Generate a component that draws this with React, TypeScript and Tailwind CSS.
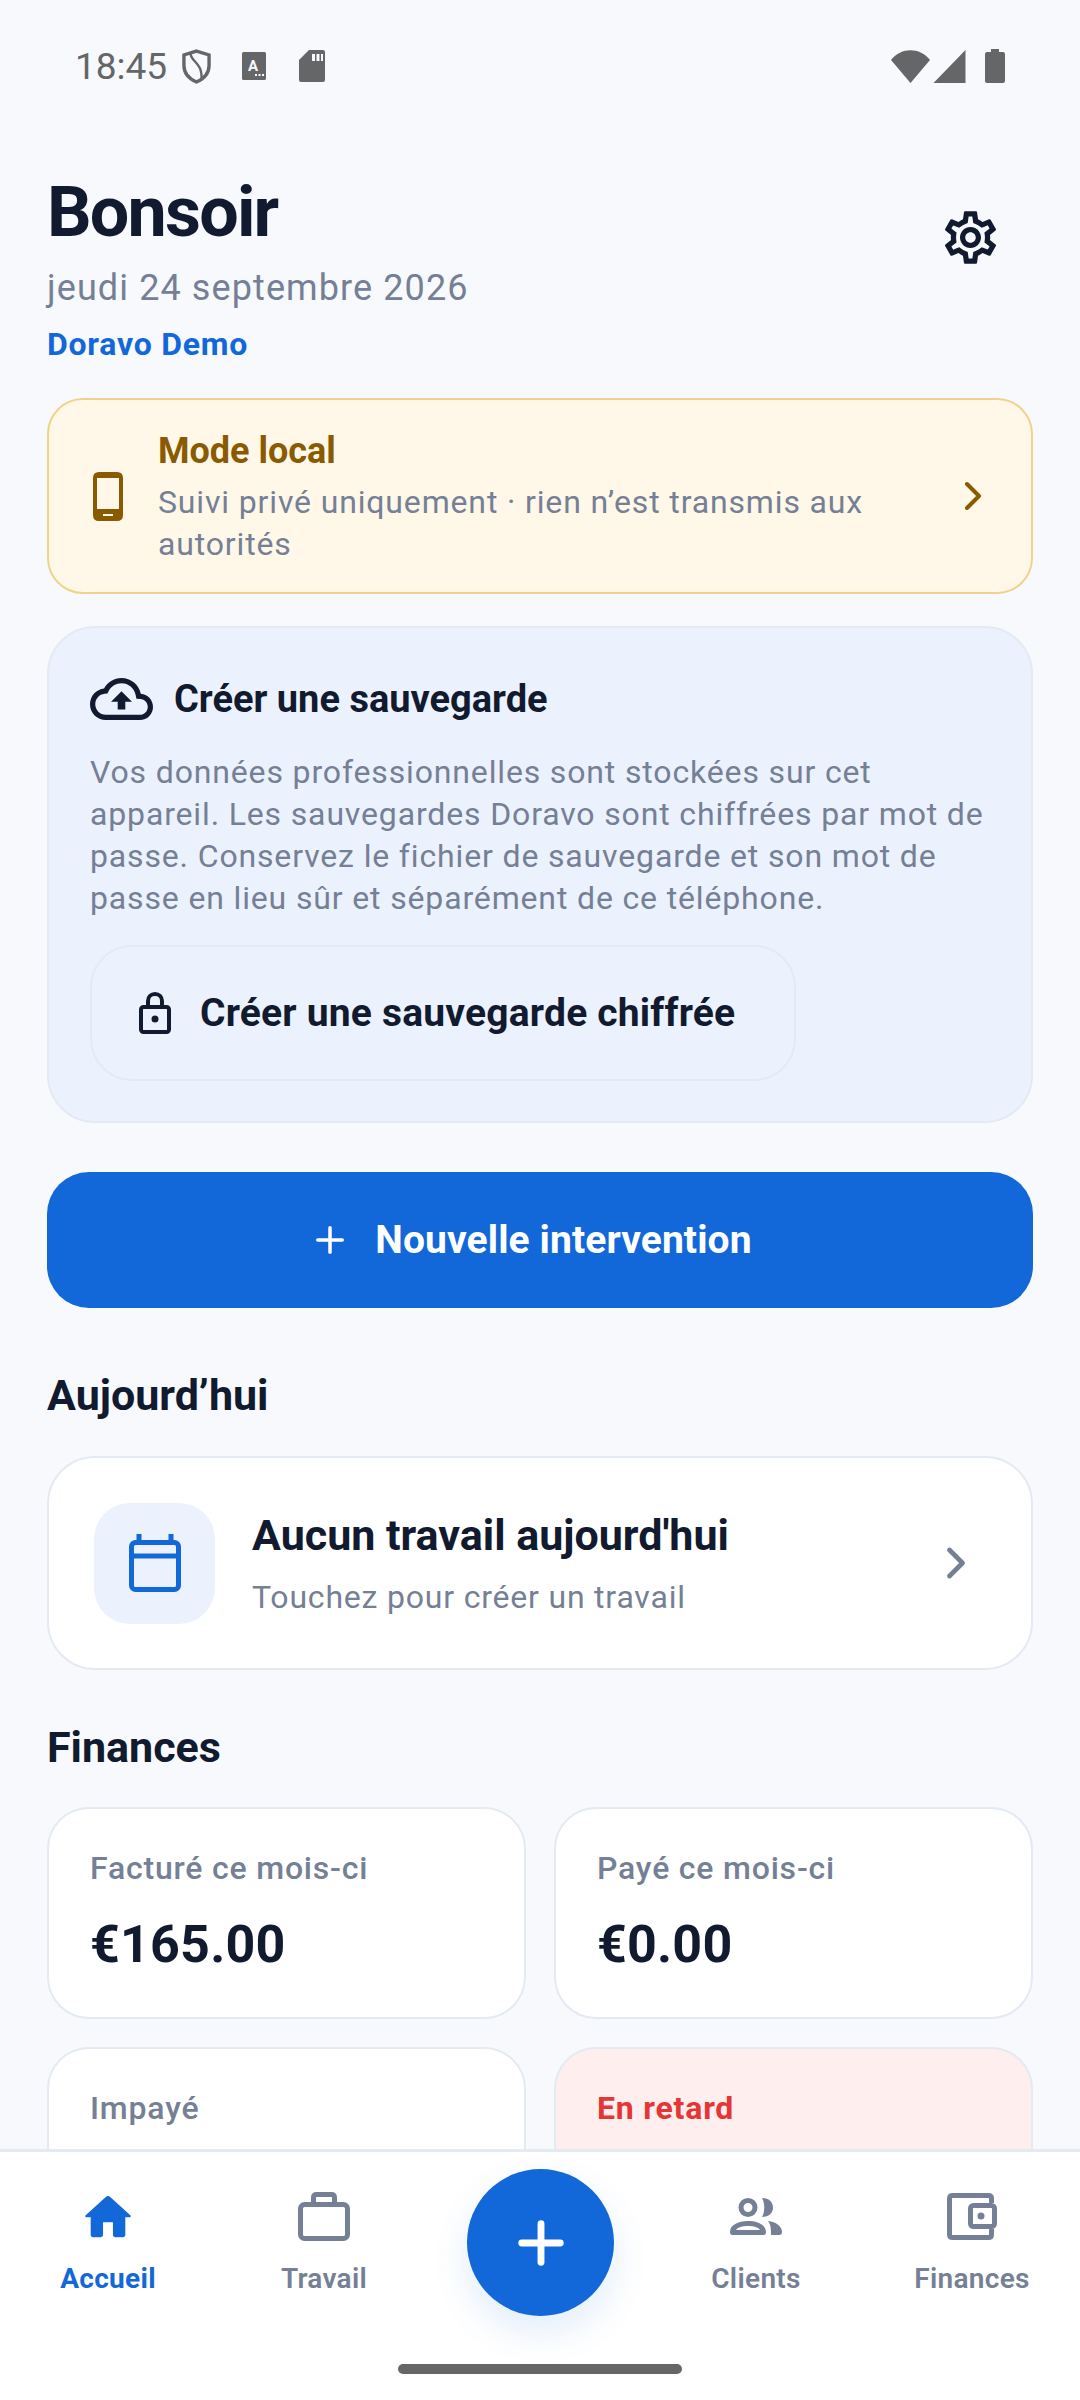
import React from 'react';
import { Plus, ChevronRight } from 'lucide-react';

const GearIcon = () => (
  <svg viewBox="0 0 24 24" className="w-[63px] h-[63px]" fill="#111a2e">
    <path d="M19.43 12.98c.04-.32.07-.64.07-.98s-.03-.66-.07-.98l2.11-1.65c.19-.15.24-.42.12-.64l-2-3.46c-.12-.22-.39-.3-.61-.22l-2.49 1c-.52-.4-1.08-.73-1.69-.98l-.38-2.65C14.46 2.18 14.25 2 14 2h-4c-.25 0-.46.18-.49.42l-.38 2.65c-.61.25-1.17.59-1.69.98l-2.49-1c-.23-.09-.49 0-.61.22l-2 3.46c-.13.22-.07.49.12.64l2.11 1.65c-.04.32-.07.65-.07.98s.03.66.07.98l-2.11 1.65c-.19.15-.24.42-.12.64l2 3.46c.12.22.39.3.61.22l2.49-1c.52.4 1.08.73 1.69.98l.38 2.65c.03.24.24.42.49.42h4c.25 0 .46-.18.49-.42l.38-2.65c.61-.25 1.17-.59 1.69-.98l2.49 1c.23.09.49 0 .61-.22l2-3.46c.12-.22.07-.49-.12-.64l-2.11-1.65zm-1.98-1.71c.04.31.05.52.05.73s-.02.43-.05.73l-.14 1.13.89.7 1.08.84-.7 1.21-1.27-.51-1.04-.42-.9.68c-.43.32-.84.56-1.25.73l-1.06.43-.16 1.13-.2 1.35h-1.4l-.19-1.35-.16-1.13-1.06-.43c-.43-.18-.83-.41-1.23-.71l-.91-.7-1.06.43-1.27.51-.7-1.21 1.08-.84.89-.7-.14-1.13c-.03-.31-.05-.54-.05-.74s.02-.43.05-.73l.14-1.13-.89-.7-1.08-.84.7-1.21 1.27.51 1.04.42.9-.68c.43-.32.84-.56 1.25-.73l1.06-.43.16-1.13.2-1.35h1.39l.19 1.35.16 1.13 1.06.43c.43.18.83.41 1.23.71l.91.7 1.06-.43 1.27-.51.7 1.21-1.07.85-.89.7.14 1.13zM12 8c-2.21 0-4 1.79-4 4s1.79 4 4 4 4-1.79 4-4-1.79-4-4-4zm0 6c-1.1 0-2-.9-2-2s.9-2 2-2 2 .9 2 2-.9 2-2 2z" />
  </svg>
);

const StatusBar = () => (
  <div className="h-[132px] shrink-0 flex items-center justify-between pl-[75px] pr-[75px]">
    <div className="flex items-center">
      <span className="text-[37px] leading-none text-[#646668] font-['Roboto',sans-serif]">18:45</span>
      <svg viewBox="0 0 30 36" className="w-[29px] h-[35px] ml-[15px]" fill="none" stroke="#646668" strokeWidth="3.5">
        <path d="M15 2 L28 6 V17 C28 26 22 31 15 34 C8 31 2 26 2 17 V6 Z" />
        <path d="M9 5 C9 13 22 14 20 32" strokeWidth="2.5" />
      </svg>
      <svg viewBox="0 0 24 28" className="w-[24px] h-[28px] ml-[31px]">
        <rect width="24" height="28" rx="1.5" fill="#646668" />
        <text x="11" y="19" fontSize="15" fontWeight="700" textAnchor="middle" fill="#f7f9fd" fontFamily="Roboto, sans-serif">A</text>
        <rect x="13" y="22" width="2" height="2" fill="#f7f9fd" />
        <rect x="16.5" y="22" width="2" height="2" fill="#f7f9fd" />
        <rect x="20" y="22" width="2" height="2" fill="#f7f9fd" />
      </svg>
      <svg viewBox="0 0 26 32" className="w-[26px] h-[32px] ml-[33px]">
        <path d="M10 0 H24 Q26 0 26 2 V30 Q26 32 24 32 H2 Q0 32 0 30 V10 Z" fill="#646668" />
        <rect x="13" y="4" width="3" height="7" fill="#f7f9fd" />
        <rect x="17.5" y="4" width="3" height="7" fill="#f7f9fd" />
        <rect x="22" y="4" width="2" height="7" fill="#f7f9fd" />
      </svg>
    </div>
    <div className="flex items-center">
      <svg viewBox="0 0 39 33" className="w-[39px] h-[33px]" fill="#646668">
        <path d="M0 10 C10 -3 29 -3 39 10 L19.5 33 Z" />
      </svg>
      <svg viewBox="0 0 32 33" className="w-[33px] h-[33px] ml-[3px]" fill="#646668">
        <path d="M32 0 V33 H0 Z" />
      </svg>
      <svg viewBox="0 0 20 34" className="w-[20px] h-[34px] ml-[19px]" fill="#646668">
        <path d="M6 0 H14 V3 H18 Q20 3 20 5 V32 Q20 34 18 34 H2 Q0 34 0 32 V5 Q0 3 2 3 H6 Z" />
      </svg>
    </div>
  </div>
);

const Header = () => (
  <div className="flex items-start justify-between pl-[47px] pr-[78px] pt-[40px]">
    <div>
      <h1 className="text-[70px] leading-[80px] font-bold tracking-[-1.8px] text-[#111a2e]">Bonsoir</h1>
      <p className="mt-[14px] text-[36px] leading-[44px] text-[#757f95] tracking-[1.1px]">jeudi 24 septembre 2026</p>
      <p className="mt-[15px] text-[32px] leading-[38px] font-bold text-[#1268d8] tracking-[0.75px]">Doravo Demo</p>
    </div>
    <div className="mt-[34px]"><GearIcon /></div>
  </div>
);

const LocalModeCard = () => (
  <div className="mt-[35px] mx-[47px] h-[196px] rounded-[36px] border-2 border-[#f0d28a] bg-[#fff8e8] flex items-center pl-[44px] pr-[42px]">
    <svg viewBox="0 0 30 49" className="w-[30px] h-[49px] shrink-0">
      <path fillRule="evenodd" fill="#8a5a00" d="M6 0 H24 Q30 0 30 6 V43 Q30 49 24 49 H6 Q0 49 0 43 V6 Q0 0 6 0 Z M4 6 V37 H26 V6 Z M10 42 V44 H20 V42 Z" />
    </svg>
    <div className="ml-[35px] flex-1 min-w-0 pr-[20px] pt-[3px]">
      <p className="text-[36px] leading-[42px] font-bold text-[#8a5a00]">Mode local</p>
      <p className="mt-[9px] text-[32px] leading-[42px] text-[#757f95] tracking-[0.85px]">Suivi privé uniquement · rien n’est transmis aux autorités</p>
    </div>
    <ChevronRight className="w-[48px] h-[48px] shrink-0 text-[#8a5a00] -mr-[8px]" strokeWidth={2} />
  </div>
);

const BackupCard = () => (
  <div className="mt-[32px] mx-[47px] h-[497px] rounded-[48px] border-2 border-[#e4eaf2] bg-[#ebf2fe] pl-[41px] pr-[38px] pt-[49px]">
    <div className="flex items-center h-[44px]">
      <svg viewBox="0 4 24 16" className="w-[63px] h-[42px] shrink-0" fill="#111a2e">
        <path d="M19.35 10.04C18.67 6.59 15.64 4 12 4 9.11 4 6.6 5.64 5.35 8.04 2.34 8.36 0 10.91 0 14c0 3.31 2.69 6 6 6h13c2.76 0 5-2.24 5-5 0-2.64-2.05-4.78-4.65-4.96zM19 18H6c-2.21 0-4-1.79-4-4 0-2.05 1.53-3.76 3.56-3.97l1.07-.11.5-.95C8.08 7.14 9.94 6 12 6c2.62 0 4.88 1.86 5.39 4.43l.3 1.5 1.53.11c1.56.1 2.78 1.41 2.78 2.96 0 1.65-1.35 3-3 3zM8 13h2.55v3h2.9v-3H16l-4-4z" />
      </svg>
      <span className="ml-[21px] text-[38px] leading-[44px] font-bold text-[#111a2e]">Créer une sauvegarde</span>
    </div>
    <p className="mt-[30px] text-[32px] leading-[42px] text-[#757f95] tracking-[0.85px]">
      Vos données professionnelles sont stockées sur cet appareil. Les sauvegardes Doravo sont chiffrées par mot de passe. Conservez le fichier de sauvegarde et son mot de passe en lieu sûr et séparément de ce téléphone.
    </p>
    <div className="mt-[26px] w-[706px] h-[136px] rounded-[42px] border-2 border-[#e4eaf2] flex items-center pl-[47px]">
      <svg viewBox="0 0 32 42" className="w-[32px] h-[42px] shrink-0" fill="none" stroke="#111a2e" strokeWidth="4">
        <rect x="2" y="15" width="28" height="25" rx="2.5" />
        <path d="M9 15 V9 C9 5 12 2 16 2 C20 2 23 5 23 9 V15" />
        <circle cx="16" cy="27" r="3.5" fill="#111a2e" stroke="none" />
      </svg>
      <span className="ml-[29px] text-[39px] leading-[46px] font-bold text-[#111a2e] tracking-[0.2px]">Créer une sauvegarde chiffrée</span>
    </div>
  </div>
);

const SummaryCard = ({ label, value, danger }: { label: string; value?: string; danger?: boolean }) => (
  <div className={`h-[212px] rounded-[42px] border-2 border-[#e4eaf2] pl-[41px] pt-[40px] ${danger ? 'bg-[#feeeee]' : 'bg-white'}`}>
    <p className={`text-[32px] leading-[38px] tracking-[0.8px] ${danger ? 'font-bold text-[#e53535]' : 'font-medium text-[#757f95]'}`}>{label}</p>
    {value && <p className="mt-[28px] text-[52px] leading-[60px] font-bold text-[#111a2e] tracking-[0.2px]">{value}</p>}
  </div>
);

const NavItem = ({ label, active, children }: { label: string; active?: boolean; children: React.ReactNode }) => (
  <div className="flex flex-col items-center pt-[38px]">
    <div className="h-[52px] flex items-center justify-center">{children}</div>
    <span className={`mt-[21px] text-[28px] leading-[32px] tracking-[0.3px] ${active ? 'font-bold text-[#1268d8]' : 'font-semibold text-[#757f95]'}`}>{label}</span>
  </div>
);

const BottomNav = () => (
  <div className="relative h-[251px] shrink-0 bg-white border-t-[3px] border-[#e4eaf2]">
    <div className="grid grid-cols-5">
      <NavItem label="Accueil" active>
        <svg viewBox="2.3 3.3 19.4 16.7" className="w-[48px] h-[43px]" fill="#1268d8">
          <path d="M10 19v-5h4v5c0 .55.45 1 1 1h3c.55 0 1-.45 1-1v-7h1.7c.46 0 .68-.57.33-.87L12.67 3.6c-.38-.34-.96-.34-1.34 0l-8.36 7.53c-.34.3-.13.87.33.87H5v7c0 .55.45 1 1 1h3c.55 0 1-.45 1-1z" />
        </svg>
      </NavItem>
      <NavItem label="Travail">
        <svg viewBox="0 0 52 49" className="w-[52px] h-[49px]" fill="none" stroke="#757f95" strokeWidth="5">
          <rect x="2.5" y="12.5" width="47" height="34" rx="4" />
          <path d="M15.5 12 V5.5 Q15.5 2.5 18.5 2.5 H33.5 Q36.5 2.5 36.5 5.5 V12" />
        </svg>
      </NavItem>
      <div />
      <NavItem label="Clients">
        <svg viewBox="0 0 52 37" className="w-[52px] h-[37px]" fill="#757f95">
          <circle cx="18" cy="9.5" r="7" fill="none" stroke="#757f95" strokeWidth="5" />
          <path fillRule="evenodd" d="M2.5 37 Q0 37 0 34 C0 27 8 23 18 23 C28 23 36 27 36 34 Q36 37 33.5 37 Z M6 32 H30 C28 29 24 28 18 28 C12 28 8 29 6 32 Z" />
          <path d="M32 0 C39 0 43 4 43 9.5 C43 15 39 19 32 19 C35 14 35 5 32 0 Z" />
          <path d="M38 23 C46 24 52 28 52 34 Q52 37 49 37 H41 C41 31 41 27 38 23 Z" />
        </svg>
      </NavItem>
      <NavItem label="Finances">
        <svg viewBox="0 0 50 47" className="w-[50px] h-[47px]" fill="none" stroke="#757f95" strokeWidth="5">
          <path d="M44.5 10 V5.5 Q44.5 2.5 41.5 2.5 H5.5 Q2.5 2.5 2.5 5.5 V41.5 Q2.5 44.5 5.5 44.5 H41.5 Q44.5 44.5 44.5 41.5 V36" />
          <rect x="23.5" y="12.5" width="24" height="21" rx="3" />
          <circle cx="34" cy="23" r="3.5" fill="#757f95" stroke="none" />
        </svg>
      </NavItem>
    </div>
    <div className="absolute left-[467px] top-[17px] w-[147px] h-[147px] rounded-full bg-[#1268d8] flex items-center justify-center shadow-[0_16px_36px_rgba(18,104,216,0.12)]">
      <Plus className="w-[66px] h-[66px] text-white" strokeWidth={2.5} />
    </div>
    <div className="absolute left-[398px] top-[212px] w-[284px] h-[10px] rounded-full bg-[#666666]" />
  </div>
);

export default function App() {
  return (
    <div className="w-[1080px] h-[2400px] flex flex-col overflow-hidden bg-[#f7f9fd] font-['Roboto',sans-serif]">
      <StatusBar />
      <div className="flex-1 min-h-0 overflow-hidden">
        <Header />
        <LocalModeCard />
        <BackupCard />
        <div className="mt-[49px] mx-[47px] h-[136px] rounded-[42px] bg-[#1268d8] flex items-center justify-center pr-[19px]">
          <Plus className="w-[42px] h-[42px] text-white" strokeWidth={2} />
          <span className="ml-[24px] text-[39px] leading-[46px] font-bold text-white tracking-[0.1px]">Nouvelle intervention</span>
        </div>
        <h2 className="mt-[62px] ml-[47px] text-[43px] leading-[50px] font-bold text-[#111a2e]">Aujourd’hui</h2>
        <div className="mt-[36px] mx-[47px] h-[214px] rounded-[48px] border-2 border-[#e4eaf2] bg-white flex items-center pl-[45px] pr-[49px]">
          <div className="w-[121px] h-[121px] rounded-[36px] bg-[#ebf2fe] flex items-center justify-center shrink-0">
            <svg viewBox="0 0 52 58" className="w-[52px] h-[58px]" fill="none" stroke="#1268d8" strokeWidth="5">
              <rect x="2.5" y="8.5" width="47" height="47" rx="4" />
              <path d="M2.5 22 H49.5" />
              <path d="M10 0 V8 M42 0 V8" />
            </svg>
          </div>
          <div className="ml-[37px] flex-1 min-w-0">
            <p className="text-[43px] leading-[50px] font-bold text-[#111a2e]">Aucun travail aujourd'hui</p>
            <p className="mt-[18px] text-[32px] leading-[38px] text-[#757f95] tracking-[0.8px]">Touchez pour créer un travail</p>
          </div>
          <ChevronRight className="w-[52px] h-[52px] shrink-0 text-[#757f95]" strokeWidth={2.2} />
        </div>
        <h2 className="mt-[52px] ml-[47px] text-[43px] leading-[50px] font-bold text-[#111a2e]">Finances</h2>
        <div className="mt-[35px] mx-[47px] grid grid-cols-2 gap-x-[28px] gap-y-[28px]">
          <SummaryCard label="Facturé ce mois-ci" value="€165.00" />
          <SummaryCard label="Payé ce mois-ci" value="€0.00" />
          <SummaryCard label="Impayé" />
          <SummaryCard label="En retard" danger />
        </div>
      </div>
      <BottomNav />
    </div>
  );
}
